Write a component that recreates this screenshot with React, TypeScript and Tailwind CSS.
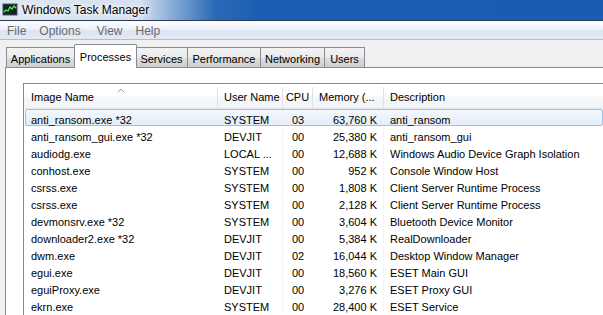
const ROWS = [
  { name: "anti_ransom.exe *32", user: "SYSTEM", cpu: "03", mem: "63,760 K", desc: "anti_ransom", selected: true },
  { name: "anti_ransom_gui.exe *32", user: "DEVJIT", cpu: "00", mem: "25,380 K", desc: "anti_ransom_gui" },
  { name: "audiodg.exe", user: "LOCAL ...", cpu: "00", mem: "12,688 K", desc: "Windows Audio Device Graph Isolation" },
  { name: "conhost.exe", user: "SYSTEM", cpu: "00", mem: "952 K", desc: "Console Window Host" },
  { name: "csrss.exe", user: "SYSTEM", cpu: "00", mem: "1,808 K", desc: "Client Server Runtime Process" },
  { name: "csrss.exe", user: "SYSTEM", cpu: "00", mem: "2,128 K", desc: "Client Server Runtime Process" },
  { name: "devmonsrv.exe *32", user: "SYSTEM", cpu: "00", mem: "3,604 K", desc: "Bluetooth Device Monitor" },
  { name: "downloader2.exe *32", user: "DEVJIT", cpu: "00", mem: "5,384 K", desc: "RealDownloader" },
  { name: "dwm.exe", user: "DEVJIT", cpu: "02", mem: "16,044 K", desc: "Desktop Window Manager" },
  { name: "egui.exe", user: "DEVJIT", cpu: "00", mem: "18,560 K", desc: "ESET Main GUI" },
  { name: "eguiProxy.exe", user: "DEVJIT", cpu: "00", mem: "3,276 K", desc: "ESET Proxy GUI" },
  { name: "ekrn.exe", user: "SYSTEM", cpu: "00", mem: "28,400 K", desc: "ESET Service" },
];

const TABS = [
  { label: "Applications", w: "w-[69px]" },
  { label: "Processes", w: "w-[63px]", active: true },
  { label: "Services", w: "w-[52px]" },
  { label: "Performance", w: "w-[73px]" },
  { label: "Networking", w: "w-[64px]" },
  { label: "Users", w: "w-[40px]" },
];

function AppIcon() {
  return (
    <svg width="16" height="14" viewBox="0 0 16 14">
      <rect x="0.5" y="0.5" width="15" height="12" rx="1" fill="#2b3a44" stroke="#8fa3b0" />
      <rect x="2" y="2" width="12" height="9" fill="#0b2a12" />
      <polyline points="2,9 4,7 6,8 8,4 10,6 12,3 14,5" fill="none" stroke="#5fe36a" strokeWidth="1.3" />
    </svg>
  );
}

export default function App() {
  return (
    <div className="w-[603px] h-[315px] overflow-hidden bg-[#f0f0f0] flex flex-col font-['Liberation_Sans',Arial,sans-serif] text-[11px] text-black">
      {/* title bar */}
      <div className="h-[20px] shrink-0 flex items-center pl-[2px] bg-[linear-gradient(90deg,#dde7f2_0px,#d3e0ee_140px,#7aa3d4_178px,#2a69b6_215px,#1b5eb1_260px,#1a5cb0_100%)]">
        <AppIcon />
        <span className="ml-[4px] text-[12px] text-black [text-shadow:0_0_6px_#fff,0_0_4px_#fff]">
          Windows Task Manager
        </span>
      </div>
      <div className="h-px shrink-0 bg-[#2b3a52]" />

      {/* menu bar */}
      <div className="h-[19px] shrink-0 flex items-center pt-[2px] bg-[linear-gradient(180deg,#fbfcfe_0%,#eef2fa_45%,#dbe3f2_55%,#e4eaf5_100%)] border-b border-[#b6bcc6] text-[12px] text-[#6a6a6a]">
        <span className="ml-[7px]">File</span>
        <span className="ml-[13px]">Options</span>
        <span className="ml-[16px]">View</span>
        <span className="ml-[13px]">Help</span>
      </div>

      {/* tabs */}
      <div className="h-[27px] shrink-0 flex items-end pl-[6px]">
        {TABS.map((t) =>
          t.active ? (
            <div
              key={t.label}
              className={`${t.w} h-[24px] -mx-[1px] relative z-10 bg-white border border-b-0 border-[#898c95] rounded-t-[2px] flex items-start justify-center pt-[4px] -mb-px`}
            >
              {t.label}
            </div>
          ) : (
            <div
              key={t.label}
              className={`${t.w} h-[20px] pt-[3px] bg-[linear-gradient(180deg,#f2f2f2_0%,#ebebeb_50%,#dddddd_51%,#cfcfcf_100%)] border border-b-0 border-l-0 first:border-l border-[#898c95] flex items-center justify-center`}
            >
              {t.label}
            </div>
          )
        )}
      </div>

      {/* panel */}
      <div className="flex-1 ml-[5px] bg-white border-l border-t border-[#898c95] pl-[17px] pt-[15px]">
        <div className="border-l border-t border-[#828790] h-full">
          {/* header */}
          <div className="h-[25px] flex pt-[3px] bg-[linear-gradient(180deg,#ffffff_0%,#ffffff_45%,#f6f7f9_55%,#f1f3f6_100%)] border-b border-[#e3e8ef]">
            <div className="w-[194px] shrink-0 relative flex items-center pl-[7px] border-r border-[#dfe3e8]">
              Image Name
              <svg className="absolute left-[93px] top-[1px]" width="8" height="5" viewBox="0 0 8 5">
                <polyline points="0.5,4.5 4,1 7.5,4.5" fill="none" stroke="#9aa2ad" strokeWidth="1" />
              </svg>
            </div>
            <div className="w-[65px] shrink-0 flex items-center pl-[6px] border-r border-[#dfe3e8]">User Name</div>
            <div className="w-[30px] shrink-0 flex items-center justify-center border-r border-[#dfe3e8]">CPU</div>
            <div className="w-[71px] shrink-0 flex items-center pl-[6px] border-r border-[#dfe3e8]">Memory (...</div>
            <div className="flex-1 flex items-center pl-[6px]">Description</div>
          </div>

          {/* rows */}
          <div>
            {ROWS.map((r, i) => (
              <div
                key={i}
                className={`h-[17px] flex items-stretch ml-px border ${
                  r.selected
                    ? "border-[#9fbde6] rounded-[2px] bg-[linear-gradient(180deg,#f4f8fd_0%,#e3edf9_100%)]"
                    : "border-transparent"
                }`}
              >
                <div className="w-[192px] shrink-0 pl-[5px] pt-[2px] whitespace-nowrap">{r.name}</div>
                <div className="w-[65px] shrink-0 pl-[6px] pt-[2px] whitespace-nowrap border-r border-[#f3f3f3]">{r.user}</div>
                <div className="w-[30px] shrink-0 pt-[2px] text-center">{r.cpu}</div>
                <div className="w-[71px] shrink-0 pt-[2px] text-right pr-[6px] border-r border-[#f3f3f3]">{r.mem}</div>
                <div className="flex-1 pl-[6px] pt-[2px] whitespace-nowrap">{r.desc}</div>
              </div>
            ))}
          </div>
        </div>
      </div>
    </div>
  );
}
